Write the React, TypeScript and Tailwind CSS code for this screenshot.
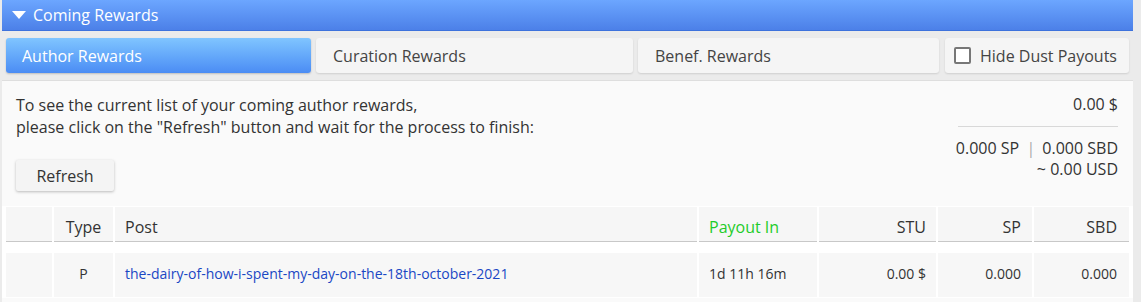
import React from "react";

const cols = [
	{ key: "blank", label: "", w: "w-[46px]", align: "text-center" },
	{ key: "type", label: "Type", w: "w-[59px]", align: "text-center" },
	{ key: "post", label: "Post", w: "w-[582px]", align: "text-left pl-[10px]" },
	{ key: "payout", label: "Payout In", w: "w-[118px]", align: "text-left pl-[10px]" },
	{ key: "stu", label: "STU", w: "w-[117px]", align: "text-right pr-[10px]" },
	{ key: "sp", label: "SP", w: "w-[94px]", align: "text-right pr-[11px]" },
	{ key: "sbd", label: "SBD", w: "w-[95px]", align: "text-right pr-[12px]" },
];

const row = {
	blank: "",
	type: "P",
	post: "the-dairy-of-how-i-spent-my-day-on-the-18th-october-2021",
	payout: "1d 11h 16m",
	stu: "0.00 $",
	sp: "0.000",
	sbd: "0.000",
};

const App = () => {
	return (
		<div className="w-[1141px] h-[302px] overflow-hidden bg-[#ebebeb] font-['Open_Sans',sans-serif] text-[#333]">
			<div className="ml-[2px] w-[1131px]">
				{/* header bar */}
				<div className="h-[31px] flex items-center bg-gradient-to-b from-[#6ca6ff] to-[#4c80e8] border-b border-[#3d72dc] text-white text-[16px]">
					<svg className="ml-[10px] mr-[7px]" width="14" height="9" viewBox="0 0 14 9">
						<path d="M0 0 L14 0 L7 8 Z" fill="#ffffff" />
					</svg>
					<span>Coming Rewards</span>
				</div>

				{/* tabs */}
				<div className="flex items-center h-[49px] pl-[4px] text-[16px]">
					<div className="w-[305px] h-[35px] flex items-center pl-[16px] rounded-[3px] bg-gradient-to-b from-[#80c5ff] to-[#4b8cf4] text-white shadow-[0_1px_2px_rgba(0,0,0,0.2)]">
						Author Rewards
					</div>
					<div className="ml-[5px] w-[317px] h-[35px] flex items-center pl-[17px] rounded-[3px] bg-[#f5f5f5] text-[#444] shadow-[0_1px_2px_rgba(0,0,0,0.12)]">
						Curation Rewards
					</div>
					<div className="ml-[5px] w-[301px] h-[35px] flex items-center pl-[17px] rounded-[3px] bg-[#f5f5f5] text-[#444] shadow-[0_1px_2px_rgba(0,0,0,0.12)]">
						Benef. Rewards
					</div>
					<div className="ml-[6px] w-[184px] h-[35px] flex items-center pl-[9px] rounded-[3px] bg-[#f5f5f5] text-[#444] shadow-[0_1px_2px_rgba(0,0,0,0.12)]">
						<span className="w-[17px] h-[17px] border-2 border-[#777] rounded-[2px] bg-white mr-[9px]" />
						Hide Dust Payouts
					</div>
				</div>

				{/* panel */}
				<div className="bg-[#fafafa] h-[222px] border-t border-[#dedede]">
					<div className="flex justify-between pl-[14px] pr-[15px] pt-[13px] text-[16px] leading-[22px]">
						<div>
							<p>To see the current list of your coming author rewards,</p>
							<p>please click on the "Refresh" button and wait for the process to finish:</p>
							<button className="mt-[22px] w-[98px] h-[31px] bg-[#f4f4f4] rounded-[2px] shadow-[0_1px_3px_rgba(0,0,0,0.25)] text-[#333]">
								Refresh
							</button>
						</div>
						<div className="flex flex-col items-end leading-[21px]">
							<div>0.00 $</div>
							<div className="w-[160px] h-px bg-[#d8d8d8] mt-[11px] mb-[11px]" />
							<div>
								0.000 SP <span className="text-[#aaa] mx-[3px]">|</span> 0.000 SBD
							</div>
							<div>~ 0.00 USD</div>
						</div>
					</div>

					{/* table */}
					<div className="mt-[15px] bg-white pl-[4px] pt-px h-[92px]">
						<div className="flex gap-[2px] h-[35px] text-[16px]">
							{cols.map((c) => (
								<div
									key={c.key}
									className={`${c.w} ${c.align} bg-[#f6f6f6] border-b border-[#c8c8c8] pt-[9px] leading-[22px] ${c.key === "payout" ? "text-[#1fcc2a]" : "text-[#333]"}`}
								>
									{c.label}
								</div>
							))}
						</div>
						<div className="flex gap-[2px] h-[44px] mt-[11px] text-[14px]">
							{cols.map((c) => (
								<div
									key={c.key}
									className={`${c.w} ${c.align} bg-[#f7f7f7] leading-[42px] ${c.key === "post" ? "text-[#1a47c4]" : "text-[#333]"}`}
								>
									{row[c.key as keyof typeof row]}
								</div>
							))}
						</div>
					</div>
				</div>
			</div>
		</div>
	);
};

export default App;
